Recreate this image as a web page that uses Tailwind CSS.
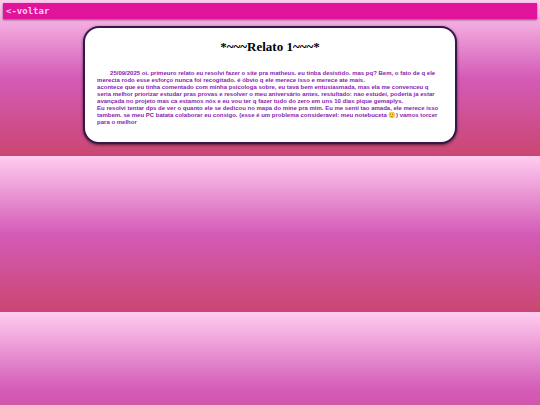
<!doctype html>
<html lang="pt-BR">
  <head>
    <meta charset="UTF-8" />
    <meta name="viewport" content="width=device-width, initial-scale=1.0" />
    <title>Relato 1</title>
    <script src="https://cdn.jsdelivr.net/npm/@tailwindcss/browser@4"></script>
  </head>
  <!-- the gradient is as tall as the content and repeats below it -->
  <body
    class="bg-linear-to-b/srgb from-[#ffcdf0] via-[#d45bb7] to-[#ca4671] px-[3px] pt-[3px] pb-3"
  >
    <nav
      class="flex h-4 items-center bg-[#e1139b] px-[3px] shadow-[0_1px_2px_#00000080]"
    >
      <a
        href="#"
        class="font-['DejaVu_Sans_Mono',monospace] text-[9px] leading-none font-bold text-[#ffd0f0]"
        >&lt;-voltar</a
      >
    </nav>

    <main
      class="mx-auto mt-[7px] w-[70%] rounded-2xl border-2 border-[#35174d] bg-white px-3 pt-3 pb-4 shadow-[0_1px_3px_#00000099]"
    >
      <h1
        class="text-center font-['Liberation_Serif',serif] text-[13px] leading-[14px] font-bold text-black"
      >
        *~~~Relato 1~~~*
      </h1>
      <p
        class="mt-4 indent-[13px] font-['Liberation_Sans','Noto_Color_Emoji',sans-serif] text-[6px] leading-[7px] font-bold whitespace-nowrap text-[#8a1cad]"
      >
        25/09/2025 oi. primeuro relato eu resolvi fazer o site pra matheus. eu tinba desistido. mas pq? Bem, o fato de q ele
        <span class="block indent-0">merecia rodo esse esforço nunca foi recogitado. é óbvio q ele merece isso e merece ate mais.</span>
        <span class="block indent-0">acontece que eu tinha comentado com minha psicologa sobre, eu tava bem entusiasmada, mas ela me convenceu q</span>
        <span class="block indent-0">seria melhor priorizar estudar pras provas e resolver o meu aniversário antes. resiultado: nao estudei, poderia ja estar</span>
        <span class="block indent-0">avançada no projeto mas ca estamos nós e eu vou ter q fazer tudo do zero em uns 10 dias pique gemaplys.</span>
        <span class="block indent-0">Eu resolvi tentar dps de ver o quanto ele se dedicou no mapa do mine pra mim. Eu me senti tao amada, ele merece isso</span>
        <span class="block indent-0">tambem. se meu PC batata colaborar eu consigo. (esse é um problema consideravel: meu notebuceta 🙂) vamos torcer</span>
        <span class="block indent-0">para o melhor</span>
      </p>
    </main>
  </body>
</html>
